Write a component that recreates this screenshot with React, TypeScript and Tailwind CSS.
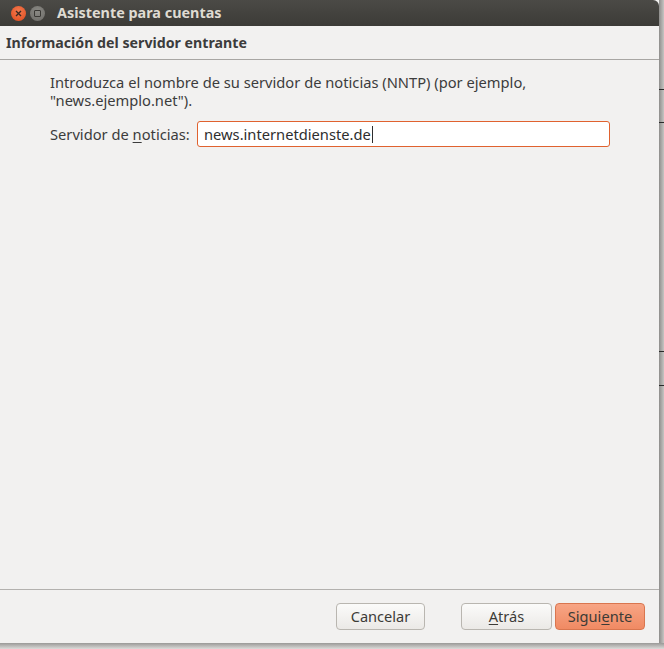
import { type ReactNode } from "react";

const font = { fontFamily: '"Noto Sans", "Open Sans", sans-serif' };

function Button({ children, primary = false, width }: { children: ReactNode; primary?: boolean; width: string }) {
  return (
    <button
      type="button"
      className={`h-[27px] ${width} rounded-[4px] border text-[14.6px] ${
        primary
          ? "border-[#d9764f] bg-[linear-gradient(180deg,#f7a585_0%,#f08a63_100%)] text-[#3c3b37]"
          : "border-[#b9b6b0] bg-[linear-gradient(180deg,#fbfbfa_0%,#ebe9e6_100%)] text-[#3c3b37]"
      }`}
    >
      {children}
    </button>
  );
}

export default function App() {
  return (
    <div className="flex h-[649px] w-[664px] flex-col bg-[#c9c8c6]" style={font}>
      <div className="flex flex-1">
        <div className="flex w-[659px] flex-col bg-[#f2f1f0]">
          {/* title bar */}
          <div className="flex h-[26px] items-center rounded-tr-[6px] bg-[linear-gradient(180deg,#4b4a46_0%,#3c3b37_100%)] pl-[11px]">
            <span className="flex h-[15px] w-[15px] items-center justify-center rounded-full bg-[radial-gradient(circle_at_50%_35%,#f47a4f_0%,#df4a1c_100%)]">
              <svg width="7" height="7" viewBox="0 0 7 7">
                <path d="M1 1L6 6M6 1L1 6" stroke="#3a2a22" strokeWidth="1.4" />
              </svg>
            </span>
            <span className="ml-[4px] flex h-[15px] w-[15px] items-center justify-center rounded-full bg-[radial-gradient(circle_at_50%_35%,#8a8984_0%,#6c6b67_100%)]">
              <span className="h-[7px] w-[7px] rounded-[1px] border border-[#3a3935]" />
            </span>
            <span className="ml-[12px] text-[14.4px] font-bold text-[#dfdbd2]">Asistente para cuentas</span>
          </div>

          {/* header */}
          <div className="flex h-[34px] items-center border-b border-[#a8a6a3] pl-[6px] text-[14.2px] font-bold text-[#3c3c3c]">
            Información del servidor entrante
          </div>

          {/* content */}
          <div className="flex-1 pl-[50px] pr-[49px] pt-[13px] text-[14.7px] leading-[18px] text-[#3c3c3c]">
            <p>
              Introduzca el nombre de su servidor de noticias (NNTP) (por ejemplo,
              <br />
              "news.ejemplo.net").
            </p>
            <div className="mt-[12px] flex items-center">
              <span className="w-[147px]">
                Servidor de <span className="underline underline-offset-2">n</span>oticias:
              </span>
              <div className="box-border flex h-[26px] flex-1 items-center rounded-[3px] border border-[#e0622f] bg-white pl-[6px] text-[#2e2e2e]">
                news.internetdienste.de
                <span className="ml-[1px] h-[17px] w-px bg-[#2e2e2e]" />
              </div>
            </div>
          </div>

          {/* footer */}
          <div className="flex h-[54px] items-start border-t border-[#b3b1ae] pt-[13px]">
            <div className="ml-[336px] flex">
              <Button width="w-[89px]">Cancelar</Button>
              <div className="ml-[36px] flex gap-[3px]">
                <Button width="w-[91px]">
                  <span className="underline underline-offset-2">A</span>trás
                </Button>
                <Button width="w-[90px]" primary>
                  Sigui<span className="underline underline-offset-2">e</span>nte
                </Button>
              </div>
            </div>
          </div>
        </div>
        {/* right shadow with background marks */}
        <div className="flex w-[5px] flex-col bg-[linear-gradient(90deg,#8e8d8b_0%,#c6c5c3_100%)]">
          <div className="mt-[89px] h-px bg-[#2a2a2a]" />
          <div className="mt-[32px] h-px bg-[#2a2a2a]" />
          <div className="mt-[228px] h-px bg-[#2a2a2a]" />
          <div className="mt-[33px] h-px bg-[#2a2a2a]" />
        </div>
      </div>
      <div className="h-[6px] bg-[linear-gradient(180deg,#9a9997_0%,#dcdbd9_100%)]" />
    </div>
  );
}
